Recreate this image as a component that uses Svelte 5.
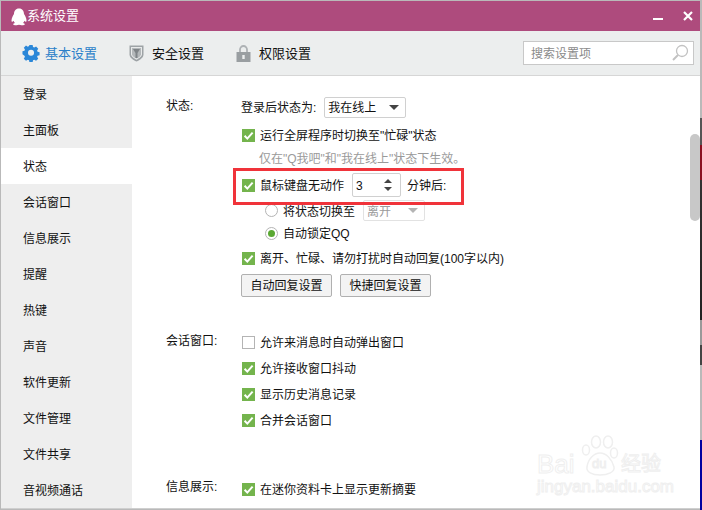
<script>
	const navItems = ['登录', '主面板', '状态', '会话窗口', '信息展示', '提醒', '热键', '声音', '软件更新', '文件管理', '文件共享', '音视频通话'];
	const activeNav = '状态';
	const sessionOptions = [
		{ text: '允许来消息时自动弹出窗口', on: false },
		{ text: '允许接收窗口抖动', on: true },
		{ text: '显示历史消息记录', on: true },
		{ text: '合并会话窗口', on: true }
	];
</script>

{#snippet check(on)}
	<span class="check" class:on>
		{#if on}
			<svg width="13" height="13" viewBox="0 0 13 13"><path d="M2.600 6.800 5.300 9.600 10.600 3.600" fill="none" stroke="#fff" stroke-width="2"/></svg>
		{/if}
	</span>
{/snippet}

<div class="window">
	<header class="titlebar">
		<svg class="penguin" width="18" height="18" viewBox="0 0 18 18"><path d="M9 .5C5.600.5 4 3 4 6 3 7.500 1.500 10 1.500 12.500c0 1.200.5 1.500 1 1.200l1-1c.3 1 .8 1.800 1.500 2.300-1 .3-2 .8-1.800 1.500.2.600 2 1 3.300.8.8-.1 1.500-.5 2.500-.5s1.700.4 2.500.5c1.300.2 3.100-.2 3.300-.8.2-.7-.8-1.200-1.800-1.500.7-.5 1.200-1.300 1.500-2.300l1 1c.5.3 1 0 1-1.200C16.500 10 15 7.500 14 6c0-3-1.600-5.500-5-5.500z" fill="#fff"/></svg>
		<span class="title">系统设置</span>
		<div class="win-buttons">
			<svg width="12" height="12" viewBox="0 0 12 12"><rect x="1" y="8" width="10" height="2" fill="#fff"/></svg>
			<svg width="12" height="12" viewBox="0 0 12 12"><path d="M2 2l8 8M10 2l-8 8" stroke="#fff" stroke-width="2.200"/></svg>
		</div>
	</header>

	<div class="tabs">
		<div class="tab active">
			<svg width="18" height="18" viewBox="0 0 18 18"><path fill="#2a87d8" fill-rule="evenodd" d="M7.300 1h3.400l.4 2.200 1.300.6 1.900-1.200 2.300 2.400-1.200 1.900.5 1.300 2.100.4v3.200l-2.100.5-.5 1.200 1.200 1.900-2.300 2.300-1.900-1.200-1.300.5-.4 2.200H7.300l-.4-2.200-1.300-.5-1.900 1.200-2.300-2.300 1.200-1.900-.5-1.200L0 10.900V7.600l2.100-.4.500-1.300-1.200-1.900 2.300-2.400 1.900 1.200 1.300-.6zM9 6a3.200 3.200 0 1 0 0 6.400A3.200 3.200 0 0 0 9 6z" transform="scale(.95) translate(.5 0)"/></svg>
			<span>基本设置</span>
		</div>
		<div class="tab">
			<svg width="15" height="17" viewBox="0 0 15 17"><path d="M.5.500h14v9c0 3-3.500 5.500-7 7-3.500-1.500-7-4-7-7z" fill="#9ea3a6"/><path d="M2 2h11v7.300c0 2.200-3 4.200-5.500 5.400C5 13.500 2 11.500 2 9.300z" fill="#e8eaea"/><path d="M3 3h9v6.200c0 1.800-2.500 3.500-4.500 4.400C5.500 12.700 3 11 3 9.200z" fill="#b4b8ba"/><path d="M4 4h7L8.500 8v5h-2V8z" fill="#7f8487"/></svg>
			<span>安全设置</span>
		</div>
		<div class="tab">
			<svg width="15" height="17" viewBox="0 0 15 17"><path d="M4 8V4.500a3.500 3.500 0 0 1 7 0V8" fill="none" stroke="#aeb2b5" stroke-width="1.800"/><rect x="0.500" y="7" width="14" height="10" fill="#999ea1"/><rect x="6.300" y="10" width="2.400" height="4" fill="#eceeee"/></svg>
			<span>权限设置</span>
		</div>
		<div class="search">
			<span>搜索设置项</span>
			<svg width="18" height="18" viewBox="0 0 18 18"><circle cx="11" cy="7" r="5.500" fill="none" stroke="#c2c2c2" stroke-width="1.300"/><path d="M7 11l-5 5" stroke="#c2c2c2" stroke-width="2"/></svg>
		</div>
	</div>

	<div class="body">
		<nav class="sidebar">
			{#each navItems as item}
				<div class="nav-item" class:active={item === activeNav}>{item}</div>
			{/each}
		</nav>

		<main class="content">
			<section class="group status">
				<div class="label">状态:</div>
				<div class="controls">
					<div class="row first">
						<span>登录后状态为:</span>
						<div class="select"><span>我在线上</span><i class="arrow"></i></div>
					</div>
					<div class="row r1">{@render check(true)}<span>运行全屏程序时切换至"忙碌"状态</span></div>
					<div class="hint">仅在"Q我吧"和"我在线上"状态下生效。</div>
					<div class="row idle">
						{@render check(true)}
						<span>鼠标键盘无动作</span>
						<div class="spinner">
							<span>3</span>
							<div class="spin-arrows"><i class="up"></i><i class="down"></i></div>
						</div>
						<span class="after">分钟后:</span>
					</div>
					<div class="row sub r-switch">
						<span class="radio"></span>
						<span>将状态切换至</span>
						<div class="select small"><span>离开</span><i class="arrow"></i></div>
					</div>
					<div class="row sub r-lock">
						<span class="radio on"></span>
						<span>自动锁定QQ</span>
					</div>
					<div class="row r-away">{@render check(true)}<span>离开、忙碌、请勿打扰时自动回复(100字以内)</span></div>
					<div class="buttons">
						<div class="btn">自动回复设置</div>
						<div class="btn">快捷回复设置</div>
					</div>
				</div>
			</section>

			<section class="group session">
				<div class="label">会话窗口:</div>
				<div class="controls list">
					{#each sessionOptions as opt}
						<div class="row">{@render check(opt.on)}<span>{opt.text}</span></div>
					{/each}
				</div>
			</section>

			<section class="group info">
				<div class="label">信息展示:</div>
				<div class="controls">
					<div class="row">{@render check(true)}<span>在迷你资料卡上显示更新摘要</span></div>
				</div>
			</section>

			<div class="scrollbar"></div>

			<div class="watermark">
				<svg width="42" height="42" viewBox="0 0 42 42"><g fill="#fff" stroke="#efefef" stroke-width="1.500"><ellipse cx="17" cy="8" rx="4.500" ry="6"/><ellipse cx="29" cy="8" rx="4.500" ry="6"/><ellipse cx="35" cy="19" rx="3.500" ry="5"/><ellipse cx="7" cy="16" rx="3.500" ry="5"/><path d="M8 33c1-8 7-14 13-14s12 6 14 14c1 5-6 8-14 8s-14-3-13-8z"/></g></svg>
				<span class="wm-bai">Bai</span>
				<span class="wm-du">du</span>
				<span class="wm-jy">经验</span>
				<span class="wm-url">jingyan.baidu.com</span>
			</div>
		</main>
	</div>
</div>

<style>
	:global(body) {
		margin: 0;
		min-height: 510px;
		background:
			linear-gradient(#b9b9b9 118px, #555 118px, #555 145px, #8a1020 145px, #8a1020 180px, #333 180px, #222 320px, #999 320px, #999 345px, #444 345px, #444 365px, #b9b9b9 365px, #b9b9b9 440px, #0000a0 440px) right top / 2px 510px no-repeat,
			#b9b9b9;
	}

	.window {
		width: 699px;
		height: 508px;
		margin: 1px 0 0 1px;
		display: flex;
		flex-direction: column;
		overflow: hidden;
		background: #fff;
		color: #111;
		font-family: "Liberation Sans", "Noto Sans CJK SC", sans-serif;
		font-size: 12px;
		line-height: 16px;
	}

	/* Titlebar */
	.titlebar {
		height: 30px;
		flex: none;
		display: flex;
		align-items: center;
		padding-left: 9px;
		background: #ae4b7d;
		color: #fff;
		font-size: 13px;
	}

	.penguin {
		margin-top: 1px;
	}

	.title {
		margin-left: -1px;
	}

	.win-buttons {
		margin-left: auto;
		display: flex;
		gap: 18px;
		padding-right: 6px;
	}

	/* Tabs */
	.tabs {
		height: 44px;
		flex: none;
		display: flex;
		align-items: center;
		padding-left: 21px;
		background: #eceeee;
		border-bottom: 1px solid #d6d6d6;
		font-size: 13px;
	}

	.tab {
		display: flex;
		align-items: center;
		gap: 8px;
		margin-right: 32px;
	}

	.tab span {
		padding-top: 2px;
	}

	.tab.active {
		color: #2a7fc9;
		gap: 5px;
	}

	.search {
		margin-left: auto;
		margin-right: 6px;
		width: 158px;
		height: 22px;
		display: flex;
		align-items: center;
		justify-content: space-between;
		padding: 0 4px 0 7px;
		background: #fff;
		border: 1px solid #c8c8c8;
		color: #8a8a8a;
		font-size: 12px;
	}

	.search span {
		padding-top: 2px;
	}

	/* Body */
	.body {
		flex: 1;
		display: flex;
		min-height: 0;
		border-bottom: 1px solid #cfcfcf;
	}

	.sidebar {
		width: 131px;
		flex: none;
		background: #eeeeee;
	}

	.nav-item {
		height: 36px;
		box-sizing: border-box;
		display: flex;
		align-items: center;
		padding: 2px 0 0 22px;
	}

	.nav-item.active {
		background: #fff;
	}

	.content {
		flex: 1;
		position: relative;
		padding-left: 34px;
		overflow: hidden;
	}

	.group {
		display: flex;
	}

	.label {
		width: 75px;
		flex: none;
		padding-top: 1px;
	}

	.status {
		padding-top: 21px;
	}

	.row {
		display: flex;
		align-items: center;
		height: 20px;
		white-space: nowrap;
	}

	.row > span,
	.select > span,
	.spinner > span {
		padding-top: 2px;
	}

	.r1 {
		margin-top: 8px;
	}

	.hint {
		height: 20px;
		box-sizing: border-box;
		margin-top: 3px;
		padding: 2px 0 0 18px;
		display: flex;
		align-items: center;
		color: #9a9a9a;
	}

	/* red annotation frame lies over the row */
	.idle {
		position: relative;
		margin-top: 7px;
	}

	.idle::after {
		content: '';
		position: absolute;
		left: -8px;
		top: -7px;
		width: 225px;
		height: 31px;
		border: 3px solid #f0333a;
		pointer-events: none;
	}

	.row > .check {
		width: 13px;
		height: 13px;
		flex: none;
		box-sizing: border-box;
		margin: 0 5px 0 1px;
		padding: 0;
		border: 1px solid #b4b4b4;
		background: #fff;
		display: block;
	}

	.row > .check.on {
		border: none;
		background: #74b44d;
	}

	.check svg {
		display: block;
	}

	.select {
		height: 19px;
		margin-left: 8px;
		padding: 0 6px 0 3px;
		width: 71px;
		display: flex;
		align-items: center;
		justify-content: space-between;
		border: 1px solid #d0d0d0;
		border-radius: 2px;
	}

	.select.small {
		width: 51px;
		margin-left: 8px;
		border-color: #e2e2e2;
		color: #9a9a9a;
	}

	.arrow {
		width: 0;
		height: 0;
		border-left: 5px solid transparent;
		border-right: 5px solid transparent;
		border-top: 5px solid #444;
	}

	.select.small .arrow {
		border-top-color: #b4b4b4;
	}

	.spinner {
		height: 22px;
		margin-left: 8px;
		display: flex;
		align-items: center;
		justify-content: space-between;
		padding-left: 3px;
		width: 44px;
		border: 1px solid #d0d0d0;
		border-radius: 2px;
	}

	.spin-arrows {
		display: flex;
		flex-direction: column;
		gap: 4px;
		margin-right: 8px;
	}

	.spin-arrows i {
		display: block;
		width: 0;
		height: 0;
		border-left: 4px solid transparent;
		border-right: 4px solid transparent;
	}

	.spin-arrows .up {
		border-bottom: 4px solid #444;
	}

	.spin-arrows .down {
		border-top: 4px solid #444;
	}

	.row > .after {
		margin-left: 6px;
	}

	.sub {
		padding-left: 24px;
	}

	.r-switch {
		margin-top: 5px;
		height: 21px;
	}

	.r-lock {
		margin-top: 2px;
	}

	.r-away {
		margin-top: 5px;
	}

	.row > .radio {
		width: 13px;
		height: 13px;
		box-sizing: border-box;
		margin-right: 5px;
		padding: 0;
		flex: none;
		border: 1px solid #b4b4b4;
		border-radius: 50%;
		background: #fff;
		display: flex;
		align-items: center;
		justify-content: center;
	}

	.radio.on::after {
		content: '';
		width: 7px;
		height: 7px;
		border-radius: 50%;
		background: #5aa832;
	}

	.buttons {
		display: flex;
		gap: 8px;
		margin-top: 6px;
	}

	.btn {
		width: 89px;
		height: 21px;
		display: flex;
		align-items: center;
		justify-content: center;
		background: #f3f3f3;
		border: 1px solid #b0b0b0;
		border-radius: 2px;
	}

	.session {
		margin-top: 35px;
	}

	.list {
		display: flex;
		flex-direction: column;
		gap: 6px;
	}

	.info {
		margin-top: 48px;
	}

	.info .controls {
		padding-top: 1px;
	}

	.scrollbar {
		position: absolute;
		right: 0;
		top: 58px;
		width: 10px;
		height: 87px;
		border-radius: 5px;
		background: #c8c8c8;
	}

	/* faint Baidu stamp over the corner */
	.watermark {
		position: absolute;
		left: 405px;
		top: 358px;
		width: 130px;
		height: 70px;
		color: #fff;
		font-family: "Liberation Sans", "Noto Sans CJK SC", sans-serif;
		-webkit-text-stroke: 1px #efefef;
		pointer-events: none;
	}

	.watermark svg {
		position: absolute;
		left: 42px;
		top: 0;
	}

	.watermark span {
		position: absolute;
	}

	.wm-bai {
		left: 0;
		top: 17px;
		font-size: 26px;
		line-height: 26px;
	}

	.wm-du {
		left: 55px;
		top: 22px;
		font-size: 13px;
	}

	.wm-jy {
		left: 84px;
		top: 17px;
		font-size: 20px;
		line-height: 26px;
		white-space: nowrap;
	}

	.wm-url {
		left: 0;
		top: 44px;
		font-size: 17px;
		line-height: 18px;
		white-space: nowrap;
	}
</style>
